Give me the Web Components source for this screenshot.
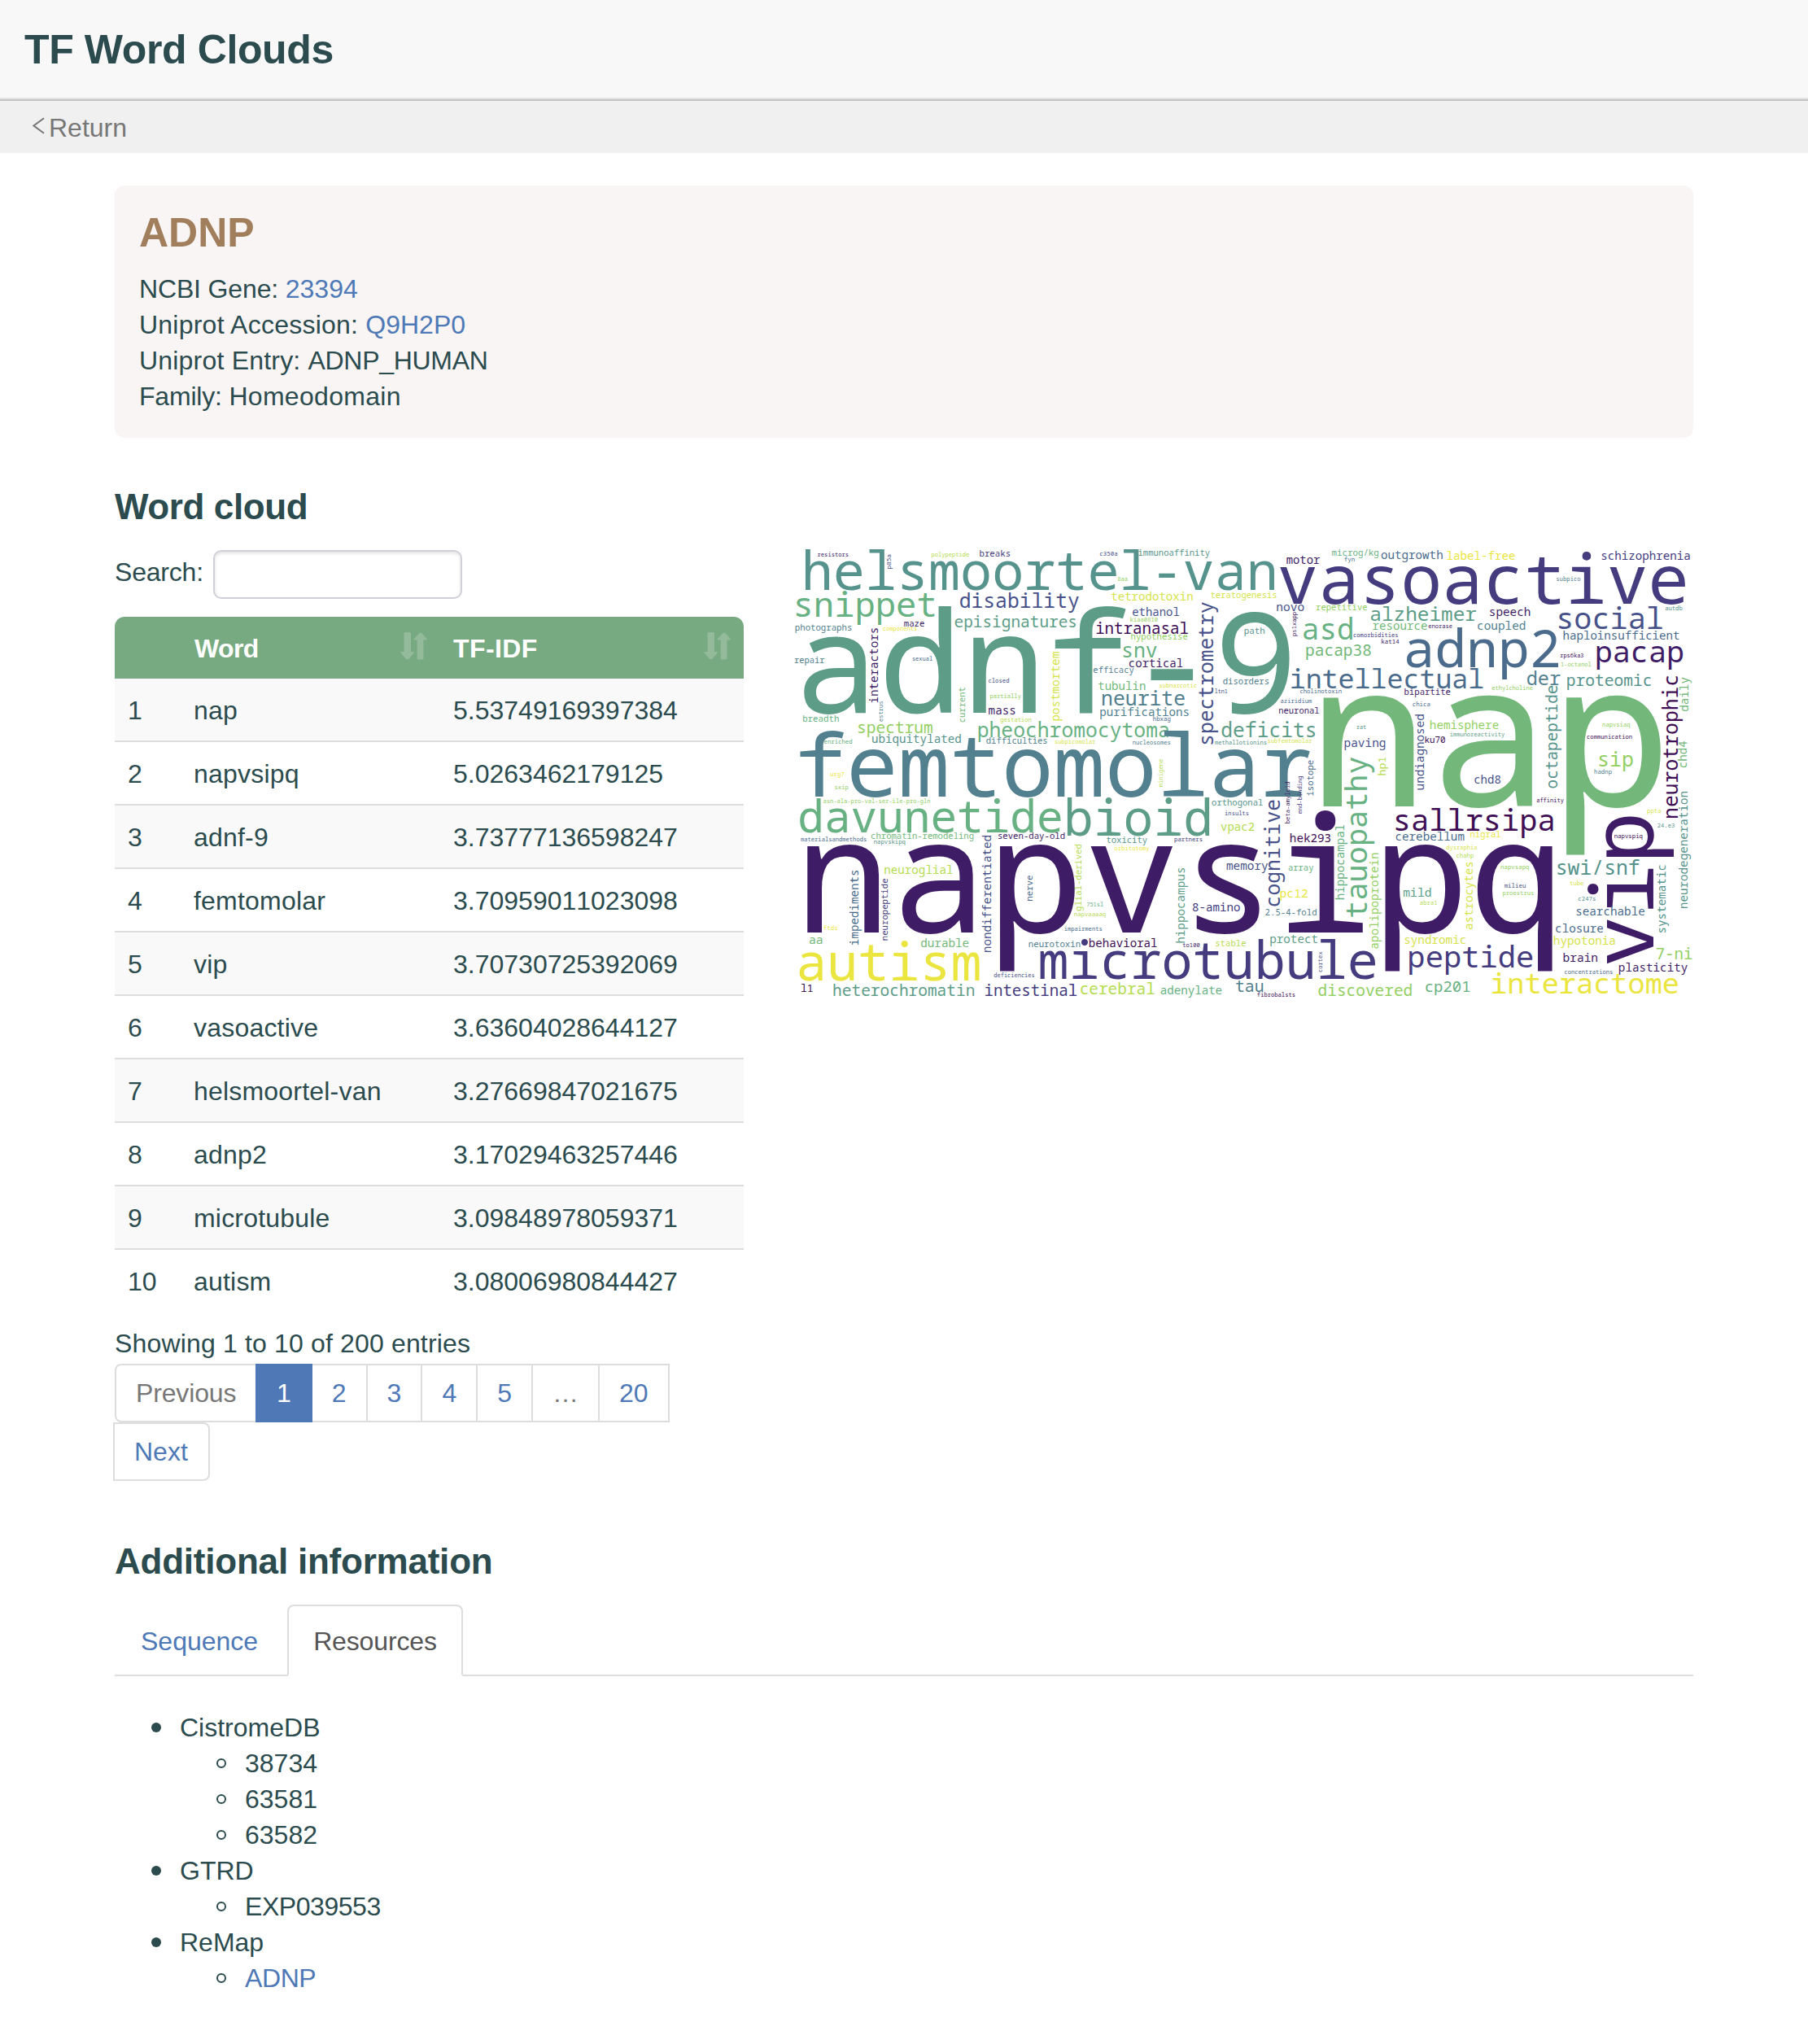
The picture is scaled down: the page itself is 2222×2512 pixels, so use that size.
<!DOCTYPE html>
<html lang="en">
<head>
<meta charset="utf-8">
<title>TF Word Clouds</title>
<style>
html,body{margin:0;padding:0;background:#fff}
body{font:32px/44px "Liberation Sans",Arial,sans-serif;color:#2b4b4e;height:2512px;overflow:hidden;
--link:#4e79b6;--line:#ddd;--muted:#777}
</style>
</head>
<body>
<tf-app></tf-app>
<script>
const define=(name,html,setup)=>customElements.define(name,class extends HTMLElement{
  constructor(){super();this.attachShadow({mode:'open'}).innerHTML=html;}
  connectedCallback(){if(setup&&!this.ready){this.ready=true;setup(this,this.shadowRoot);}}
});

define('site-header',`<style>
:host{display:block}
header{background:#f8f8f8;border-bottom:2px solid #e3e3e3;box-sizing:border-box;height:122px;padding:34px 0 0 30px}
h1{margin:0;font-size:50px;line-height:55px;font-weight:700;letter-spacing:-.38px}
nav{border-top:2px solid #c4c4c4;background:#f0f0f0;display:flex;padding:11px 0 0 40px;box-sizing:border-box;height:66px;color:#777;gap:5px}
svg{display:block;margin-top:9px}
</style><header><h1><slot></slot></h1></header>
<nav><svg width="15" height="21" viewBox="0 0 15 21"><path d="M14 1.2 1.5 10.5 14 19.8" fill="none" stroke="#777" stroke-width="2"/></svg><span>Return</span></nav>`);

define('gene-card',`<style>
:host{display:block;background:#f9f5f4;border-radius:12px;padding:31px 30px 29px;height:250px}
h2{margin:0 0 19px;font-size:50px;line-height:55px;color:#a17f5d}
</style><h2><slot name="name"></slot></h2><slot></slot>`);

define('ext-link',`<style>:host{color:var(--link);letter-spacing:0}</style><slot></slot>`);

define('section-title',`<style>:host{display:block;font-weight:700;font-size:44px;line-height:48px}</style><slot></slot>`);

define('search-field',`<style>
:host{display:flex;gap:12px;height:60px}
span{padding-top:5px;letter-spacing:-.2px}
div{width:306px;height:60px;box-sizing:border-box;border:2px solid #cfd0d8;border-radius:10px;background:#fff;box-shadow:inset 0 2px 4px rgba(0,0,0,.12)}
</style><span>Search:</span><div role="searchbox"></div>`);

define('sort-icon',`<style>:host{display:block;width:34px;height:34px;opacity:.2}svg{display:block}</style>
<svg width="34" height="34" viewBox="0 0 34 34" fill="#fff"><path d="M5.5 0h6q1.5 0 1.5 1.5V24h3q1.6 0 .6 1.3l-5.4 6.6q-1.2 1.5-3.2 1.2-1 0-1.800-1.200L.5 25.300Q-.5 24 1 24h3.500V1.500Q4.500 0 5.500 0z"/><path d="M22 33.500h5.500q1 0 1-1V9.500h3.500q1.600 0 .6-1.300L27.200 2Q24.800-1 22.500 2l-5.700 6.200q-1 1.300.5 1.300h3.400v23q0 1 1.300 1z"/></svg>`);

define('word-table',`<style>
:host{display:block}
.r{display:grid;grid-template-columns:98px 318px 1fr;height:76px;border-bottom:2px solid var(--line);padding-top:0;font-kerning:none}
.r>span{padding-top:17px}
.r>span:first-child{padding-left:16px}
.r>span:nth-child(2){letter-spacing:.2px;margin-left:-1px}
.r:nth-child(even){background:#f9f9f9}
.r:last-child{border:0;height:78px}
.h{display:grid;grid-template-columns:98px 318px 1fr;height:76px;background:#78aa82;border-radius:12px 12px 0 0;color:#fff;font-weight:700}
.h>div{display:flex;justify-content:space-between;padding:17px 15px 0 0}
.h>div:nth-child(2){padding-right:31px;letter-spacing:-.6px}
.h>div:nth-child(3){letter-spacing:.4px}
sort-icon{margin-top:2px}
</style><div id="t"><div class="h"><span></span><div>Word<sort-icon></sort-icon></div><div>TF-IDF<sort-icon></sort-icon></div></div></div>`,(el,root)=>{
  const rows=[['nap','5.53749169397384'],['napvsipq','5.0263462179125'],['adnf-9','3.73777136598247'],['femtomolar','3.70959011023098'],['vip','3.70730725392069'],['vasoactive','3.63604028644127'],['helsmoortel-van','3.27669847021675'],['adnp2','3.17029463257446'],['microtubule','3.09848978059371'],['autism','3.08006980844427']];
  root.getElementById('t').insertAdjacentHTML('beforeend',rows.map((r,i)=>`<div class="r"><span>${i+1}</span><span>${r[0]}</span><span>${r[1]}</span></div>`).join(''));
});

define('page-nav',`<style>
:host{display:flex;flex-wrap:wrap;width:700px}
span{box-sizing:border-box;height:72px;border:2px solid var(--line);padding:12px 24px;margin-left:-2px;color:var(--link)}
.m{color:var(--muted)}
.f{margin-left:0;border-radius:8px 0 0 8px;width:175px;letter-spacing:-.15px}
.a{background:var(--link);border-color:var(--link);color:#fff;z-index:1}
.n{border-radius:0 8px 8px 0;width:119px}
</style><span class="m f">Previous</span><span class="a">1</span><span>2</span><span>3</span><span>4</span><span>5</span><span class="m">…</span><span>20</span><span class="n">Next</span>`);

define('word-cloud',`<style>:host{display:block;width:1104px;height:552px}svg{display:block;overflow:visible;font-family:"Noto Sans Mono","Droid Sans Mono","Liberation Mono",monospace}</style>
<svg width="1104" height="552" viewBox="976 676 1104 552"></svg>`,(el,root)=>{
  // Viridis ramp, dark to light.
  const ramp={0:'#400e54',1:'#3f1d66',2:'#443c7e',3:'#47528a',4:'#4a6b8c',5:'#52808f',6:'#56938c',7:'#5d9d88',8:'#67b182',9:'#73b87a',A:'#93cf63',B:'#b5dc52',C:'#d5e34a',D:'#ebe540'};
  // Per tile: origin, then "word left right baseline shade"; a trailing v turns the word upwards: "word bottom top baseline shade v".
  const tiles=[
  [970,665,`helsmoortel-van 60 1788 181 6
resistors 105 217 56 1
p85a 102 50 375 3 v
polypeptide 525 663 57 B
breaks 703 813 57 2
snippet 27 535 279 8
disability 630 1067 245 3
episignatures 611 1056 318 7
photographs 23 229 331 5
maze 424 497 316 1
components 346 470 330 D
interactors 595 322 327 1 v
repair 20 130 451 5
sexual 455 527 441 4
adnf-9 55 1844 634 7
closed 735 810 521 3
partially 741 854 580 A
current 667 540 648 9 v
estrus 665 591 344 5 v
mass 736 832 640 1
breadth 51 182 666 8
gestation 779 892 667 B
spectrum 255 528 707 A
pheochromocytoma 698 1397 723 8
ubiquitylated 306 632 743 6
difficulties 727 950 746 5
enriched 129 231 746 8
femtomolar 40 1920 943 5
urg7 152 202 866 D`],
  [1240,665,`c350a 336 399 53 3
immunoaffinity 478 740 54 6
8aa 401 436 148 A
tetrodotoxin 378 677 220 C
teratogenesis 744 986 210 C
ethanol 456 627 275 3
kiaa0810 448 548 298 A
intranasal 323 660 343 0
hypothesise 451 658 364 A
snv 422 545 430 8
cortical 444 640 464 1
efficacy 312 460 486 5
postmortem 662 409 187 C v
tubulin 330 502 549 9
subnarcotic 556 691 540 C
spectrometry 748 226 753 3 v
disorders 790 957 527 5
ltn1 760 805 562 3
neurite 345 647 606 5
purifications 337 662 645 5
hbxag 532 595 664 4
deficits 785 1128 723 7
methallotionins 760 949 749 6
nucleosomes 457 594 751 5
subpicomolar 170 319 746 C
minigene 906 804 568 B v`],
  [1510,665,`motor 214 336 83 1
microg/kg 381 552 55 8
fyn 427 464 76 4
outgrowth 563 788 67 4
label-free 806 1055 68 D
vasoactive 190 1683 232 2
novo 178 277 257 3
repetitive 323 510 256 A
alzheimer 525 913 295 7
ps1xapp 349 262 250 1 v
asd 277 455 364 8
resource 532 731 328 9
enorase 737 824 320 1
comorbidities 461 624 355 2
kat14 564 628 377 1
pacap38 287 524 424 9
adnp2 657 1215 464 4
path 59 132 343 6
intellectual 232 937 543 4
cholinotoxin 264 416 562 4
bipartite 649 817 568 1
aziridium 192 306 598 4
chica 679 742 609 4
neuronal 186 333 635 1
nap 350 1592 977 9
hemisphere 744 994 692 A
immunoreactivity 817 1017 721 7
ku70 725 798 744 0
undiagnosed 916 640 720 3 v
rat 472 506 692 6
subfemtomolar 145 307 743 C
paving 428 577 758 3
hp1 862 797 578 B v
tauopathy 1385 798 510 8 v
isotope 938 808 311 4 v`],
  [1790,665,`schizophrenia 536 860 69 2
subpico 369 457 146 5
speech 124 271 276 1
social 378 758 325 3
autdb 770 832 256 6
coupled 79 253 328 5
haploinsufficient 395 820 363 4
rps6ka3 383 468 429 0
pacap 518 834 447 1
1-octanol 386 496 463 A
der 261 383 530 5
proteomic 409 716 534 6
ethylcholine 131 281 549 A
octapeptide 910 533 373 6 v
neurotrophic 1020 498 815 0 v
daily 627 503 855 9 v
chd4 834 738 848 9 v
napvsiaq 539 639 683 A
communication 482 647 730 0
sip 527 650 831 A
hadnp 509 572 857 5
chd8 67 162 893 3
affinity 296 395 962 0`],
  [970,945,`sxip 169 217 76 A
asn-ala-pro-val-ser-ile-pro-gln 126 519 125 A
davunetide 40 1000 234 8
materialsandmethods 43 284 268 4
chromatin-remodeling 303 679 259 9
napvskipq 313 427 277 6
seven-day-old 771 1015 258 1
napvsipq 67 2813 603 1
neuroglial 352 602 387 B
impediments 648 375 255 4 v
neuropeptide 631 405 364 2 v
nondifferentiated 675 246 743 3 v
ftds 127 177 595 D
aa 75 121 645 9
durable 486 661 657 9
autism 38 701 779 D
l1 45 86 823 0
heterochromatin 164 681 836 7
deficiencies 755 903 768 3
intestinal 723 1059 836 2`],
  [1240,945,`bioid 216 738 245 7
orthogonal 749 935 136 6
insults 797 883 172 3
vpac2 782 904 228 B
toxicity 360 509 274 6
partners 611 712 268 2
orbitotomy 390 517 300 D
glial-derived 523 279 268 B v
nerve 486 393 86 4 v
memory 803 954 373 3
hippocampus 641 366 648 7 v
8-amino 678 851 525 2
751sl 287 347 508 8
napvaaaaq 241 356 544 B
impairments 205 342 598 4
neurotoxin 74 262 656 5
behavioral 297 545 657 0
to100 641 703 657 1
stable 763 873 653 B
microtubule 116 1350 775 2
cerebral 265 536 830 B
adenylate 560 784 831 8
tau 837 936 822 5`],
  [1510,945,`cognitive 505 115 189 3 v
beta-amyloid 200 48 226 1 v
end-binding 165 27 270 2 v
hek293 228 375 270 0
hippocampal 480 206 427 8 v
apolipoprotein 662 310 551 A v
sallrsipa 617 1195 229 0
cerebellum 617 868 265 4
dysraphia 803 915 296 C
chahp 840 903 326 B
nigral 892 1002 253 D
array 221 312 376 8
pc12 191 291 474 D
2.5-4-fold 136 323 541 5
mild 645 745 470 7
abra1 706 768 502 B
protect 154 327 642 7
syndromic 650 873 646 C
peptide 667 1119 731 2
cortex 748 674 346 3 v
discovered 332 674 836 A
cp201 727 888 822 8
fibrobalsts 106 244 839 0`],
  [1790,945,`vip 718 176 726 1 v
napvspiq 583 685 254 0
ppta 704 753 163 C
24.e3 742 803 215 6
neurodegeneration 513 84 851 6 v
systematic 603 355 770 6 v
swi/snf 373 675 389 6
tube 419 468 429 C
c247s 450 512 486 6
searchable 443 693 541 4
astrocytes 591 344 59 C v
napvsapq 164 267 369 A
milieu 177 255 438 3
proestrus 171 284 466 A
closure 367 540 604 4
hypotonia 360 584 649 C
brain 395 519 711 1
7-ni 737 868 702 A
plasticity 600 851 747 1
concentrations 399 575 755 4
interactome 132 816 828 D`]];
  const svg=root.querySelector('svg'),ctx=document.createElement('canvas').getContext('2d');
  ctx.font='200px "Noto Sans Mono","Droid Sans Mono","Liberation Mono",monospace';
  let out='';
  for(const [ox,oy,list] of tiles)for(const line of list.split('\n')){
    const [w,a,b,base,shade,v]=line.trim().split(' ');
    const m=ctx.measureText(w),ink=m.actualBoundingBoxLeft+m.actualBoundingBoxRight;
    const size=Math.abs(b-a)/3/ink*200,off=m.actualBoundingBoxLeft*size/200;
    const x=v?ox+base/3:ox+a/3+off,y=v?oy+a/3-off:oy+base/3;
    out+=`<text font-size="${size.toFixed(2)}" fill="${ramp[shade]}" transform="translate(${x.toFixed(2)} ${y.toFixed(2)})${v?' rotate(-90)':''}">${w}</text>`;
  }
  svg.innerHTML=out;
});

define('info-tabs',`<style>
:host{display:flex;height:88px;box-sizing:border-box;border-bottom:2px solid var(--line)}
span{box-sizing:border-box;height:88px;padding:21px 30px 19px;border:2px solid transparent;margin-right:4px;color:var(--link)}
.on{color:#555;background:#fff;border-color:var(--line);border-bottom-color:#fff;border-radius:8px 8px 0 0;letter-spacing:-.15px}
</style><span>Sequence</span><span class="on">Resources</span>`);

define('list-item',`<style>
:host{display:block}
div{display:flex;align-items:center;height:44px}
i{width:12px;height:12px;border-radius:50%;background:currentColor;box-sizing:border-box;margin:0 23px 0 45px}
:host([nested]) i{background:none;border:2px solid #2b4b4e;margin-left:125px}
</style><div><i></i><slot></slot></div>`);

define('tf-app',`<style>
:host{display:block}
main{width:1940px;margin-left:141px;padding-top:40px}
.cols{display:flex;gap:62px;margin-top:29px;height:1144px}
.left{width:773px}
word-table{margin-top:22px}
.info{margin-top:15px;letter-spacing:.16px}
page-nav{margin-top:3px}
.t1{margin-top:61px;letter-spacing:-.4px}
.t2{margin-top:75px;letter-spacing:-.22px}
info-tabs{margin-top:29px}
.list{margin-top:41px}
</style>
<site-header>TF Word Clouds</site-header>
<main>
<gene-card><span slot="name">ADNP</span>
<div style="letter-spacing:-.15px">NCBI Gene: <ext-link>23394</ext-link></div><div style="letter-spacing:.23px">Uniprot Accession: <ext-link>Q9H2P0</ext-link></div><div><span style="letter-spacing:.2px">Uniprot Entry: </span><span style="letter-spacing:-.3px">ADNP_HUMAN</span></div><div><span style="letter-spacing:-.2px">Family: </span><span style="letter-spacing:.3px">Homeodomain</span></div></gene-card>
<section-title class="t1">Word cloud</section-title>
<div class="cols"><div class="left"><search-field></search-field><word-table></word-table><div class="info">Showing 1 to 10 of 200 entries</div><page-nav></page-nav></div><word-cloud></word-cloud></div>
<section-title class="t2">Additional information</section-title>
<info-tabs></info-tabs>
<div class="list"><list-item>CistromeDB</list-item><list-item nested>38734</list-item><list-item nested>63581</list-item><list-item nested>63582</list-item><list-item>GTRD</list-item><list-item nested style="letter-spacing:-.45px">EXP039553</list-item><list-item>ReMap</list-item><list-item nested><ext-link style="letter-spacing:-.4px">ADNP</ext-link></list-item></div>
</main>`);
</script>
</body>
</html>
